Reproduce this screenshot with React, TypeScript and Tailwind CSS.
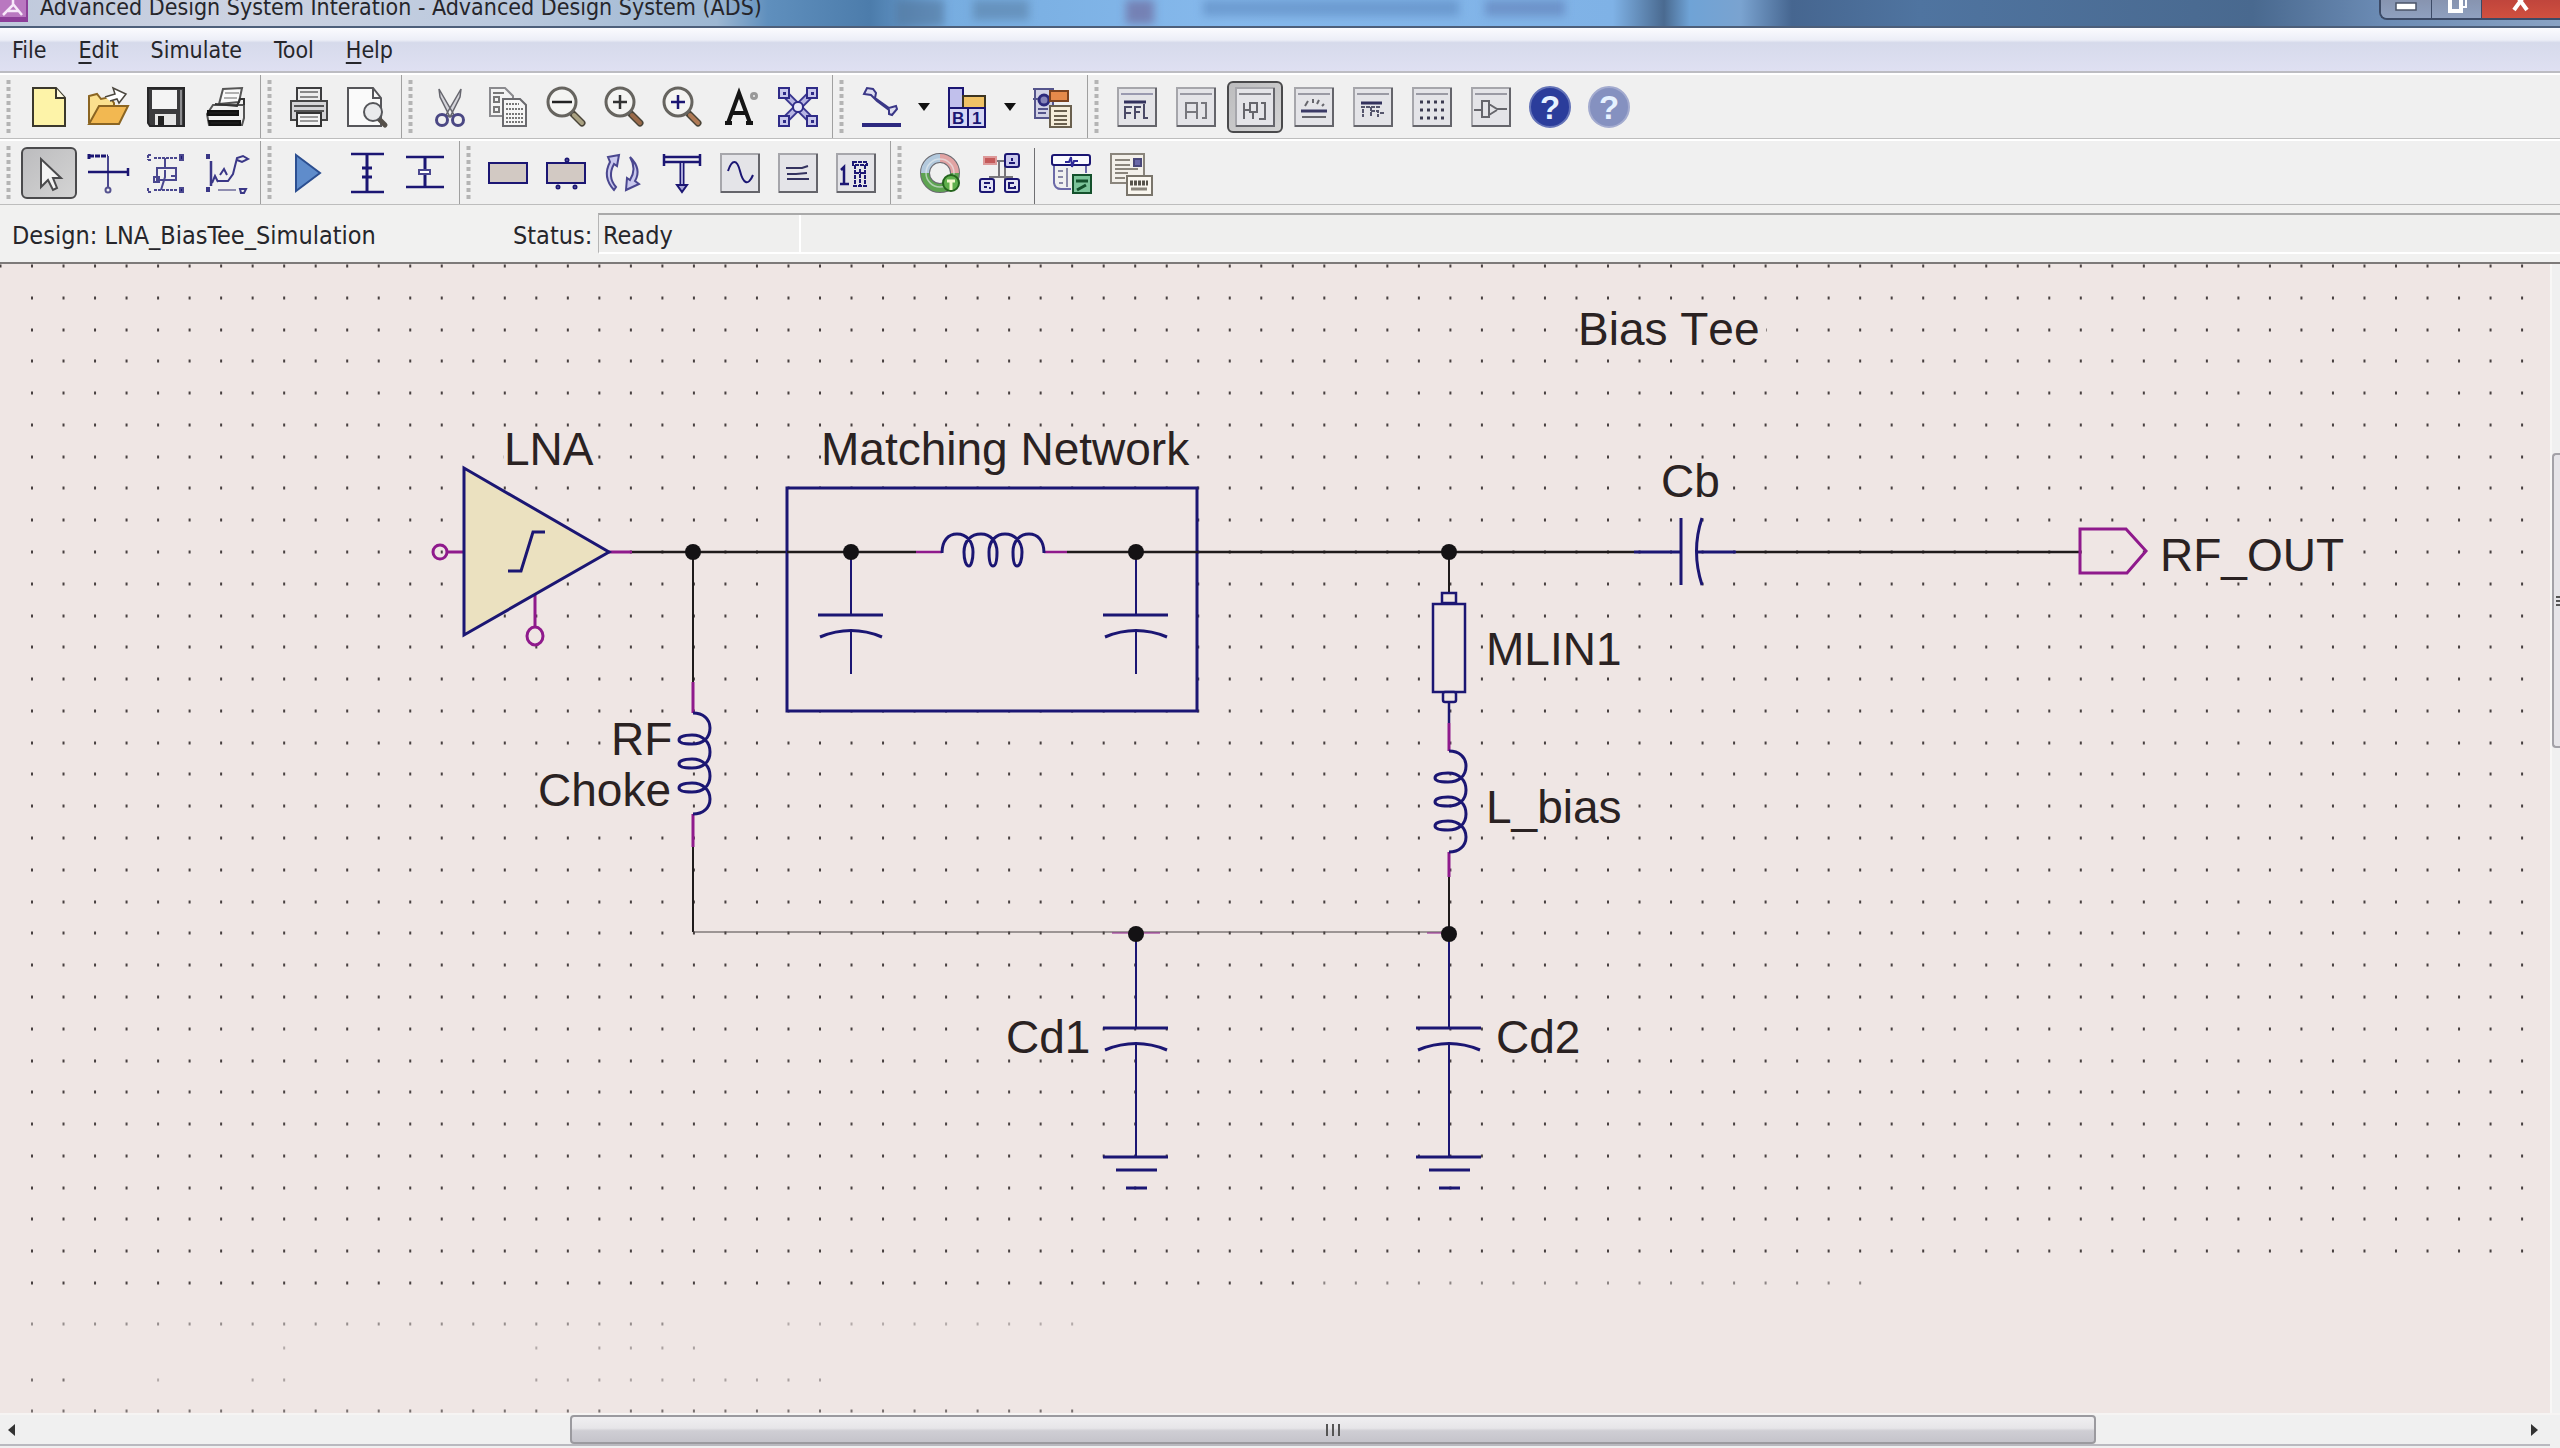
import type { ReactNode } from 'react'
import clsx from 'clsx'

const NAVY = '#1b1673'
const INK = '#1f1b1b'
const PIN = '#8f1a8c'
const SHEET = '#efe6e4'
const UI_FONT = "font-['DejaVu_Sans_Condensed','Noto_Sans',sans-serif]"

export default function App() {
  return (
    <div className={clsx('flex h-screen flex-col overflow-hidden bg-[#efefef] text-[23px] leading-7 text-[#26262b]', UI_FONT)}>
      <TitleBar />
      <MenuBar />
      <MainToolbar />
      <DrawToolbar />
      <StatusRow />
      <div className="flex min-h-0 flex-1 border-t-2 border-[#7d7a79]">
        <main className="min-w-0 flex-1 bg-[#efe6e4]">
          <Schematic />
        </main>
        <VerticalScroll />
      </div>
      <HorizontalScroll />
    </div>
  )
}

/* ---------- window chrome ---------- */

function TitleBar() {
  return (
    <header className="relative flex h-7 shrink-0 items-start overflow-hidden border-b-2 border-[#4d5f7a] bg-[linear-gradient(90deg,#bfc9dc_0%,#cdd3e2_10%,#b9c8dd_20%,#9db7d2_28%,#5f8fbd_30%,#4c7cab_34%,#77ade0_37%,#86b9ec_48%,#7fb2e6_63%,#4a6a90_65%,#6fa3d6_66%,#7aa3d0_68%,#466690_70%,#4f74a0_75%,#49698f_88%,#6b8bb4_93%,#8aa3c4_100%)]">
      {/* shapes of the window behind, seen through the glass */}
      <div className="absolute inset-y-0 left-[35%] w-12 bg-[#54779c]/60 blur-xs" />
      <div className="absolute top-0 left-[38%] h-5 w-14 bg-[#54779c]/50 blur-xs" />
      <div className="absolute top-0 left-[44%] h-6 w-7 bg-[#6d5f93]/60 blur-xs" />
      <div className="absolute top-0 left-[47%] h-4 w-64 bg-[#5580b8]/50 blur-xs" />
      <div className="absolute top-0 left-[58%] h-4 w-20 bg-[#5a74ad]/50 blur-xs" />
      <svg className="relative h-[22px] w-7 shrink-0" viewBox="0 0 28 22">
        <rect width="28" height="22" fill="#8d3f99" />
        <rect y="0" width="26" height="17" fill="#b978c0" />
        <path d="M3 15 L13 5 L13 -3 M13 4 L22 15 M8 11 H18" stroke="#f7e9fa" strokeWidth="2.5" fill="none" />
      </svg>
      <h1 className="relative -mt-[7px] ml-3 flex-1 whitespace-nowrap">Advanced Design System Interation - Advanced Design System (ADS)</h1>
      <div className="relative flex h-5 overflow-hidden rounded-bl-lg border-b-2 border-l-2 border-[#3c4a66]">
        <button aria-label="Minimize" className="flex w-[51px] justify-center border-r border-[#3c4a66] bg-linear-to-b from-[#8794b0] to-[#8fa0bf]">
          <svg width="24" height="14"><rect x="2" y="3" width="20" height="7" fill="#fff" stroke="#4b5468" strokeWidth="1.5" /></svg>
        </button>
        <button aria-label="Restore" className="flex w-[50px] justify-center border-r border-[#3c4a66] bg-linear-to-b from-[#8794b0] to-[#8fa0bf]">
          <svg width="26" height="16"><path d="M12 -3h10v10h-3" fill="none" stroke="#fff" strokeWidth="2" /><rect x="6" y="-2" width="11" height="13" fill="none" stroke="#fff" strokeWidth="4" /></svg>
        </button>
        <button aria-label="Close" className="flex w-[78px] justify-center bg-linear-to-b from-[#c0453c] to-[#d0503f]">
          <svg width="26" height="14"><path d="M6 -8 L19 10 M19 -8 L6 10" stroke="#fff" strokeWidth="4" /></svg>
        </button>
      </div>
    </header>
  )
}

const MENUS = [
  { key: '', rest: 'File' },
  { key: 'E', rest: 'dit' },
  { key: '', rest: 'Simulate' },
  { key: '', rest: 'Tool' },
  { key: 'H', rest: 'elp' },
]

function MenuBar() {
  return (
    <nav className="flex h-[45px] shrink-0 items-center gap-8 border-b-2 border-[#bcbcc2] bg-[linear-gradient(180deg,#fbfbfe_0%,#eceef7_28%,#d6daeb_34%,#dfe0f2_100%)] px-3">
      {MENUS.map(m => (
        <button key={m.key + m.rest} className="leading-7">
          {m.key && <span className="underline decoration-2 underline-offset-4">{m.key}</span>}
          {m.rest}
        </button>
      ))}
    </nav>
  )
}

function StatusRow() {
  return (
    <div className="flex h-[57px] shrink-0 items-stretch bg-[#f1f1f0] pt-2 text-[25px]">
      <div className="flex w-[598px] shrink-0 items-center pb-1 pl-3">
        <span className="w-[501px]">Design: LNA_BiasTee_Simulation</span>
        <span>Status:</span>
      </div>
      <div className="mb-2 flex flex-1 items-center border-t-2 border-b-2 border-l border-t-[#a9a9a9] border-b-white border-l-[#b5b5b5] bg-[#efefee]">
        <output className="flex h-full w-[202px] items-center border-r-2 border-white pt-1 pl-1">Ready</output>
      </div>
    </div>
  )
}

function HorizontalScroll() {
  return (
    <div className="flex h-[35px] shrink-0 items-start border-t-2 border-[#f6f4f3] bg-[#f0f0f0]">
      <div className="flex h-[31px] flex-1 border-b-2 border-[#b9b9bf]">
        <button aria-label="Scroll left" className="flex w-6 items-center justify-center">
          <svg width="8" height="12"><path d="M7 0 L0 6 L7 12 Z" fill="#333" /></svg>
        </button>
        <div className="flex-[547]" />
        <div className="flex flex-[1524] items-center justify-center gap-1 rounded-sm border-2 border-[#9b9a9f] bg-[linear-gradient(180deg,#f0eff1_0%,#e6e5e8_45%,#cfced4_55%,#c5c4cb_100%)]">
          <i className="h-3 w-0.5 bg-[#555]" />
          <i className="h-3 w-0.5 bg-[#555]" />
          <i className="h-3 w-0.5 bg-[#555]" />
        </div>
        <div className="flex-[435]" />
        <button aria-label="Scroll right" className="flex w-5 items-center justify-start">
          <svg width="8" height="12"><path d="M1 0 L8 6 L1 12 Z" fill="#333" /></svg>
        </button>
      </div>
      <div className="w-2.5" />
    </div>
  )
}

function VerticalScroll() {
  return (
    <div className="flex w-2.5 shrink-0 flex-col border-l-2 border-[#f8f7f6] bg-[#f0f0f0]">
      <div className="flex-[190]" />
      <div className="flex flex-[292] flex-col items-end justify-center gap-0.5 rounded-l-sm border-2 border-r-0 border-[#a3a2a8] bg-[#e6e5e9]">
        <i className="h-0.5 w-1 bg-[#555]" />
        <i className="h-0.5 w-1 bg-[#555]" />
        <i className="h-0.5 w-1 bg-[#555]" />
      </div>
      <div className="flex-[667]" />
    </div>
  )
}

/* ---------- toolbars ---------- */

function ToolRow({ children }: { children: ReactNode }) {
  return <div className="flex h-[66px] shrink-0 border-t-2 border-b border-t-white border-b-[#bdbdbd] bg-[#f0f0f0]">{children}</div>
}

function Group({ children, wide, last }: { children: ReactNode; wide?: boolean; last?: boolean }) {
  return (
    <div className={clsx('flex items-center pr-[5px]', wide ? '[&>button]:min-w-[59px]' : '[&>button]:min-w-7', !last && 'border-r border-[#a0a0a0]')}>
      <svg className="mr-2 ml-1.5 h-14 w-[5px] shrink-0">
        <path d="M2.5 1 V56" stroke="#b4b4b4" strokeWidth="4" strokeDasharray="4 3" />
      </svg>
      {children}
    </div>
  )
}

function Tool({ label, pressed, children }: { label: string; pressed?: boolean; children: ReactNode }) {
  return (
    <button aria-label={label} className="flex w-[58px] justify-center">
      <span className={clsx('flex h-[52px] w-14 items-center justify-center rounded-md border-2', pressed ? 'border-[#4a4a4c] bg-linear-to-br from-[#bcbcbe] to-[#d4d4d4]' : 'border-transparent')}>
        <svg className="h-10 w-10 overflow-visible" viewBox="0 0 40 40" fill="none" stroke={NAVY} strokeWidth="2">
          {children}
        </svg>
      </span>
    </button>
  )
}

function Drop({ label }: { label: string }) {
  return (
    <button aria-label={label} className="flex w-7 justify-center">
      <svg width="12" height="8"><path d="M0 0H12L6 8Z" fill="#111" /></svg>
    </button>
  )
}

function Tile({ children }: { children?: ReactNode }) {
  return (
    <>
      <rect x="1" y="1" width="38" height="38" fill="#e4e4e8" stroke="#a6a6ab" />
      <path d="M39 1 V39 H1" stroke="#65656b" />
      {children}
    </>
  )
}

function Lens({ sign, handle, ink }: { sign: string; handle: string; ink: string }) {
  return (
    <>
      <path d="M27 27 L36 36" stroke="#4a4438" strokeWidth="7" strokeLinecap="round" />
      <path d="M28 28 L36 36" stroke={handle} strokeWidth="4" strokeLinecap="round" />
      <circle cx="16" cy="15" r="14" fill="#f4f4f2" stroke="#66645f" strokeWidth="3" />
      <path d={sign} stroke={ink} strokeWidth="2.5" />
    </>
  )
}

function MainToolbar() {
  return (
    <ToolRow>
      <Group wide>
        <Tool label="New">
          <path d="M4 1 H27 L36 11 V39 H4 Z" fill="#fdf3a8" stroke="#3b382c" />
          <path d="M27 1 V11 H36" fill="#fffbe0" stroke="#3b382c" />
        </Tool>
        <Tool label="Open">
          <path d="M1 36 V9 L9 7 L13 12 L22 10 L26 16 V20" fill="#fbe08e" stroke="#8b6522" />
          <path d="M1 37 L11 19 H40 L31 37 Z" fill="#f2b851" stroke="#8b6522" />
          <path d="M17 10 L27 7 L25 1 L38 7 L31 16 L29 12 L22 14" fill="#fff" stroke="#4a463e" strokeWidth="1.5" />
        </Tool>
        <Tool label="Save">
          <path d="M1 1 H37 V39 H3 L1 36 Z" fill="#3b3b3d" stroke="#262628" />
          <rect x="5" y="3" width="25" height="19" fill="#f4f4f4" stroke="none" />
          <rect x="8" y="27" width="21" height="11" fill="#e6e6e6" stroke="none" />
          <rect x="11" y="29" width="6" height="9" fill="#222" stroke="none" />
          <path d="M34 3V38" stroke="#8d8d90" />
        </Tool>
        <Tool label="Print setup">
          <path d="M13 17 L17 2 L36 1 L33 15 Z" fill="#fafafa" stroke="#555" />
          <path d="M19 6H33 M18 11H31" stroke="#999" strokeWidth="1.5" />
          <path d="M1 27 L7 18 H38 V31 L36 38 H3 Z" fill="#f0f0f0" stroke="#555" />
          <path d="M9 17 L31 19 L34 12 H38 V18" stroke="#333" />
          <path d="M2 24 H32 V28 H2 Z M3 34 H34 V38 H4 Z" fill="#1a1a1a" stroke="#111" />
        </Tool>
      </Group>
      <Group>
        <Tool label="Print">
          <rect x="8" y="1" width="24" height="15" fill="#eee" stroke="#3d3d3f" />
          <path d="M11 5H29 M11 10H29" stroke="#888" />
          <path d="M2 14 H38 V33 H2 Z" fill="#d5d5d7" stroke="#444" />
          <path d="M5 19 H35 M5 24 H35" stroke="#555" />
          <rect x="8" y="26" width="24" height="13" fill="#f3f3f3" stroke="#333" />
          <path d="M11 30H29 M11 34H29" stroke="#999" />
        </Tool>
        <Tool label="Print preview">
          <path d="M1 1 H26 L34 11 V39 H1 Z" fill="#fafafa" stroke="#56565a" />
          <path d="M26 1 V11 H34" stroke="#56565a" />
          <path d="M32 32 L38 38" stroke="#55504a" strokeWidth="5" strokeLinecap="round" />
          <circle cx="26" cy="25" r="9" fill="#e9eaec" stroke="#55565a" />
        </Tool>
      </Group>
      <Group>
        <Tool label="Cut">
          <path d="M9 2 L24 28 L20 30 L10 10 Z M31 2 L16 28 L20 30 L30 10 Z" fill="#d4d4da" stroke="#66666e" strokeWidth="1.5" />
          <circle cx="12" cy="33" r="5.5" strokeWidth="3" stroke="#4b4884" />
          <circle cx="28" cy="33" r="5.5" strokeWidth="3" stroke="#4b4884" />
        </Tool>
        <Tool label="Copy">
          <path d="M2 1 H17 L25 9 V29 H2 Z" fill="#f3f3f3" stroke="#8a8a8e" />
          <path d="M5 6H16 M6 10H11V15H6Z M6 20H11V25H6Z" stroke="#777" />
          <path d="M15 12 H32 L38 18 V39 H15 Z" fill="#f6f6f6" stroke="#6a6a6e" />
          <path d="M18 17H31 M18 22H35 M18 27H35 M18 31H35 M18 35H35" stroke="#777" strokeDasharray="2 1" />
        </Tool>
        <Tool label="Zoom out"><Lens sign="M6 15 H26" handle="#a9a182" ink="#222" /></Tool>
        <Tool label="Zoom in"><Lens sign="M9 15 H23 M16 8 V22" handle="#9a6a4a" ink="#333" /></Tool>
        <Tool label="Zoom area"><Lens sign="M9 15 H23 M16 8 V22" handle="#b07a55" ink={NAVY} /></Tool>
        <Tool label="Text">
          <path d="M8 36 L19 6 L30 36 M12 26H26 M5 36H12 M26 36H33" stroke="#151515" strokeWidth="4" />
          <circle cx="34" cy="9" r="2.5" stroke="#999" strokeWidth="3" />
        </Tool>
        <Tool label="Fit view">
          <path d="M8 8 L32 32 M32 8 L8 32" strokeWidth="8" stroke="#3a3790" />
          <path d="M8 8 L32 32 M32 8 L8 32" stroke="#b7b5e3" strokeWidth="4" />
          {[[1, 1], [29, 1], [1, 29], [29, 29]].map(([x, y]) => (
            <g key={`${x}-${y}`}>
              <rect x={x} y={y} width="10" height="10" fill="#c9c8ec" stroke="#2f2b88" />
              <rect x={x + 4} y={y + 4} width="3" height="3" fill="#2f2b88" stroke="none" />
            </g>
          ))}
          <circle cx="20" cy="20" r="5" fill="#e9e9f8" stroke="#2f2b88" />
        </Tool>
      </Group>
      <Group>
        <Tool label="Insert wire">
          <path d="M3 7 L6 1 L12 2 L15 6 L14 11 L28 21 L35 19 L36 22 L31 28 L28 27 L28 23 L16 14 L10 8 Z" fill="#dedef0" stroke="#3a3787" />
          <path d="M1 38 H40" strokeWidth="4" stroke="#2d297f" />
        </Tool>
        <Drop label="Wire options" />
        <Tool label="Component">
          <path d="M2 1 H16 V21 H2 Z" fill="#c1c0ec" />
          <path d="M16 9 H38 V21 H16 Z" fill="#f0c266" stroke="#3c3420" />
          <path d="M2 21 H38 V40 H2 Z M21 21 V40" fill="#d6d6f4" />
          <text x="5" y="37" fontSize="17" fontWeight="bold" fontFamily="Liberation Sans, sans-serif" fill="#1b1673" stroke="none">B</text>
          <text x="25" y="37" fontSize="17" fontWeight="bold" fontFamily="Liberation Sans, sans-serif" fill="#1b1673" stroke="none">1</text>
        </Tool>
        <Drop label="Component options" />
        <Tool label="Netlist">
          <path d="M2 2 H20 V31 H2 Z" fill="#d3d3e6" stroke="#55558c" />
          <circle cx="11" cy="13" r="5" fill="#8583b8" stroke="#2d2a7c" strokeWidth="3" />
          <path d="M0 2H6 M0 12H5 M5 22H15 M5 26H13" stroke="#55558c" />
          <rect x="17" y="4" width="18" height="10" fill="#e58a4b" stroke="#7b4320" />
          <path d="M17 19 H38 V40 H17 Z" fill="#f5edda" stroke="#6a604e" />
          <path d="M21 24H34 M21 29H34 M21 33H34 M21 37H34" stroke="#6a604e" />
        </Tool>
      </Group>
      <Group wide last>
        <Tool label="Schematic view">
          <Tile><path d="M4 7H36" stroke="#9a9ab0" /><path d="M7 15H29" stroke="#32315c" strokeWidth="3" /><path d="M8 32V20H15 M8 26H14 M18 32V20H24 M18 25H23 M27 17V31H31" stroke="#4a4966" /></Tile>
        </Tool>
        <Tool label="Layout view">
          <Tile><path d="M4 7H36" stroke="#9a9aa4" /><path d="M10 32V16H21V32 M10 25H20 M25 16H30V31H26" stroke="#77777d" /></Tile>
        </Tool>
        <Tool label="Symbol view" pressed>
          <Tile><path d="M4 7H36" stroke="#88888f" /><path d="M9 16V32 M9 23H15 M15 16H22V25H15Z M18 25V32 M26 16H30V32H24" stroke="#66666c" /></Tile>
        </Tool>
        <Tool label="Substrate">
          <Tile><path d="M4 7H36" stroke="#9a9aa4" /><path d="M7 24H33" stroke="#3b3a66" strokeWidth="3" /><path d="M8 30H32" stroke="#66666c" /><path d="M11 19 L14 14 M19 16V12 M23 17L25 13 M28 19L30 17" stroke="#66666c" /></Tile>
        </Tool>
        <Tool label="Plot">
          <Tile><path d="M4 7H36" stroke="#9a9aa4" /><path d="M8 16H29" stroke="#32315c" strokeWidth="3" /><path d="M8 20H28 M10 22V30 M18 20V30 M18 24H25V30 M27 26H31" stroke="#55556c" strokeDasharray="4 1" /></Tile>
        </Tool>
        <Tool label="Grid">
          <Tile><path d="M4 7H36" stroke="#9a9aa4" /><path d="M8 15H34 M8 23H34 M8 31H34" stroke="#3b3a50" strokeWidth="3" strokeDasharray="3 4" /></Tile>
        </Tool>
        <Tool label="Port">
          <Tile><path d="M4 7H36" stroke="#9a9aa4" /><path d="M3 23H11 M11 14H18V30H11Z M18 17L26 22H36 M18 28L26 23" stroke="#66666c" /></Tile>
        </Tool>
        <Tool label="Help">
          <circle cx="20" cy="20" r="20" fill="#2b3d9b" stroke="#6473b8" />
          <text x="20" y="32" textAnchor="middle" fontSize="33" fontWeight="bold" fontFamily="Liberation Sans, sans-serif" fill="#e6f2ff" stroke="none">?</text>
        </Tool>
        <Tool label="Context help">
          <circle cx="20" cy="20" r="20" fill="#8591c0" stroke="#a3abcf" />
          <text x="20" y="32" textAnchor="middle" fontSize="33" fontWeight="bold" fontFamily="Liberation Sans, sans-serif" fill="#e6f2ff" stroke="none">?</text>
        </Tool>
      </Group>
    </ToolRow>
  )
}

function DrawToolbar() {
  return (
    <ToolRow>
      <Group wide>
        <Tool label="Select" pressed>
          <path d="M12 6 V34 L19 27 L24 37 L28 35 L24 25 H32 Z" fill="#f3f3f3" stroke="#4a4a4c" />
        </Tool>
        <Tool label="Draw wire">
          <path d="M1 1 V6 M1 3 H20" strokeWidth="3" strokeDasharray="5 1" />
          <path d="M20 3 V34" stroke="#4a478f" />
          <path d="M0 19 H40 M40 15 V23" strokeWidth="2.5" />
          <circle cx="20" cy="37" r="2.5" stroke="#55528f" />
        </Tool>
        <Tool label="Instance">
          <g stroke="#4a478f">
            <path d="M1 2H5 M1 7H5 M1 2V7 M7 5H31" strokeDasharray="3 1" />
            <path d="M33 2H36V7H33Z M33 35H36V39H33Z" fill={NAVY} />
            <path d="M10 15H29V27H10Z M7 24H12V29H7Z M24 23H29V27" />
            <path d="M18 5V14 M18 17V24 L14 37" />
            <path d="M1 35V39H5 M7 37H31" strokeDasharray="3 1" />
          </g>
        </Tool>
        <Tool label="Trace">
          <g stroke="#3a3787">
            <path d="M1 2H3V5H1Z M1 35H3V38H1Z" fill={NAVY} />
            <path d="M5 8V33" strokeWidth="2.5" />
            <path d="M6 30 L9 23 L12 29 M14 22 L18 16 L21 22 M12 28 H22 L27 21 L31 5 L37 3 L42 6 L36 9 L31 7" />
            <path d="M12 37H30" stroke="#8f8db0" />
            <path d="M34 36H40L38 40H35Z" />
          </g>
        </Tool>
      </Group>
      <Group>
        <Tool label="Simulate">
          <path d="M7 2 L31 20 L7 38 Z" fill="#5f8ccb" stroke="#2c4f91" />
        </Tool>
        <Tool label="Marker">
          <path d="M4 1H37 M4 39H37" strokeWidth="2.5" />
          <path d="M20 1V39" strokeWidth="3" />
          <path d="M15 15H25 M15 24H25" strokeWidth="3" />
        </Tool>
        <Tool label="Delta marker">
          <path d="M1 4H39 M1 34H39" strokeWidth="2.5" />
          <path d="M20 4V34" strokeWidth="3" />
          <rect x="14" y="17" width="11" height="4" fill="#fff" stroke="#4a478f" />
        </Tool>
      </Group>
      <Group>
        <Tool label="Rectangle">
          <rect x="1" y="10" width="38" height="20" fill="#d2c9c3" />
        </Tool>
        <Tool label="Subcircuit">
          <rect x="1" y="10" width="38" height="20" fill="#d2c9c3" />
          <circle cx="21" cy="7" r="1.5" /><circle cx="12" cy="34" r="1.5" /><circle cx="29" cy="34" r="1.5" />
        </Tool>
        <Tool label="Rotate">
          <path d="M4 4 L15 2 L13 13 L10 11 Q3 24 12 34 L10 37 Q-2 24 6 9 Z" fill="#c9c8ee" stroke="#4a478f" />
          <path d="M26 4 Q38 16 31 28 L35 31 L22 37 L23 25 L26 27 Q33 16 26 4 Z" fill="#c9c8ee" stroke="#4a478f" />
        </Tool>
        <Tool label="Align">
          <path d="M1 4H39 M1 9H39 M2 1V13 M38 1V13" strokeWidth="2.5" />
          <path d="M20 10V33" strokeWidth="5" /><path d="M20 10V33" stroke="#aaa8d8" />
          <path d="M15 32H25L20 39Z" fill="#aaa8d8" />
        </Tool>
        <Tool label="Source"><Tile><path d="M8 18 C12 6 17 6 20 18 S28 34 33 22" /></Tile></Tool>
        <Tool label="Variables"><Tile><path d="M8 15H24L30 13 M9 21H18L29 20 M9 26H31" stroke="#33325f" /></Tile></Tool>
        <Tool label="Equation">
          <Tile>
            <path d="M5 17L8 14V30 M4 31H13" strokeWidth="2.5" />
            <path d="M17 9H31V12H17Z M19 12V34 M29 12V34 M24 16V32 M19 20H29 M17 33H31" strokeDasharray="4 1" />
          </Tile>
        </Tool>
      </Group>
      <Group wide last>
        <Tool label="Tuning">
          <circle cx="20" cy="20" r="15" strokeWidth="10" stroke="#6b6b72" />
          <path d="M5 20 A15 15 0 0 1 20 5" strokeWidth="8" stroke="#b3c9dd" />
          <path d="M20 5 A15 15 0 0 1 35 20" strokeWidth="8" stroke="#e1a3a3" />
          <path d="M35 20 A15 15 0 0 1 5 20" strokeWidth="8" stroke="#5da351" />
          <circle cx="20" cy="20" r="14" stroke="#e9eef0" strokeWidth="1.5" opacity="0.6" />
          <circle cx="31" cy="30" r="8" fill="#5fb04c" stroke="#24641d" />
          <path d="M27 28H35 M31 28V37" stroke="#f3f9ce" strokeWidth="3" />
        </Tool>
        <Tool label="Hierarchy">
          <path d="M16 8H26 M20 8V25 M10 24H34 M26 10V28" stroke="#77757a" />
          <rect x="5" y="4" width="12" height="7" fill="#c45a5a" stroke="#d99" />
          <rect x="26" y="1" width="14" height="13" rx="2" fill="#c9c8ec" />
          <path d="M30 10H36 M33 5V8" />
          <rect x="1" y="26" width="14" height="13" rx="2" fill="#e2e2f4" /><path d="M5 30H11 M5 34H8 M10 35H12" />
          <rect x="26" y="26" width="14" height="13" rx="2" fill="#e2e2f4" /><path d="M35 30H30V35H36V33" />
        </Tool>
        <i className="mr-1.5 ml-1.5 h-14 w-px self-end bg-[#6f6f72]" />
        <Tool label="Data display">
          <path d="M3 12 V30 Q4 36 10 36 H20 M35 12 V20" stroke="#6b69a8" />
          <path d="M7 18H12 M7 24H12 M8 30H12 M16 15V34" stroke="#8a89a8" />
          <rect x="1" y="2" width="38" height="10" rx="2" fill="#fafaff" />
          <path d="M14 9H18L20 4L21 14L23 8H27" stroke="#2f2b9a" />
          <rect x="22" y="22" width="18" height="18" fill="#7cc49a" stroke="#14512c" />
          <path d="M25 28H37 M26 37L35 32" stroke="#14512c" strokeWidth="3" />
        </Tool>
        <Tool label="Report">
          <rect x="1" y="1" width="33" height="29" fill="#f3f0ea" stroke="#8a857c" />
          <path d="M5 7H20 M5 12H20 M5 16H28 M5 20H18 M5 25H15" stroke="#8a857c" />
          <rect x="24" y="6" width="7" height="7" fill="#6a68a8" stroke="#4a487a" />
          <rect x="17" y="23" width="25" height="19" fill="#faf7f0" stroke="#7a756b" />
          <path d="M20 30H38" stroke="#57534b" strokeWidth="5" strokeDasharray="3 1" /><path d="M21 36H37" stroke="#8a857c" strokeWidth="3" />
        </Tool>
      </Group>
    </ToolRow>
  )
}

/* ---------- schematic sheet ---------- */

const LABELS = [
  { text: 'Bias Tee', x: 1578, y: 345, w: 188 },
  { text: 'LNA', x: 504, y: 465, w: 92 },
  { text: 'Matching Network', x: 821, y: 465, w: 372 },
  { text: 'Cb', x: 1661, y: 497, w: 62 },
  { text: 'RF_OUT', x: 2160, y: 571, w: 188 },
  { text: 'RF', x: 611, y: 755, w: 62 },
  { text: 'Choke', x: 538, y: 806, w: 134 },
  { text: 'MLIN1', x: 1486, y: 665, w: 134 },
  { text: 'L_bias', x: 1486, y: 823, w: 138 },
  { text: 'Cd1', x: 1006, y: 1053, w: 80 },
  { text: 'Cd2', x: 1496, y: 1053, w: 84 },
]

// the last rows of the grid fade out: [y, from, to, opacity]
const FADING_ROWS = [
  [1283, 32, 1300, 0.85],
  [1283, 1310, 1870, 0.5],
  [1324, 32, 670, 0.45],
  [1324, 787, 1080, 0.3],
  [1348, 284, 300, 0.3],
  [1348, 535, 540, 0.3],
  [1348, 598, 700, 0.35],
  [1380, 32, 70, 0.6],
  [1380, 127, 160, 0.3],
  [1380, 252, 290, 0.35],
  [1380, 535, 830, 0.35],
  [1411, 32, 1100, 0.6],
]

const PITCH_X = 31.52
const PITCH_Y = 31.78

function DotRow({ y, from, to, opacity }: { y: number; from: number; to: number; opacity: number }) {
  const start = 32 + Math.ceil((from - 32) / PITCH_X) * PITCH_X
  return <line x1={start - 1} x2={to} y1={y} y2={y} stroke="#2b2424" strokeWidth="3" strokeDasharray={`2 ${PITCH_X - 2}`} opacity={opacity} />
}

function Node({ x, y }: { x: number; y: number }) {
  return <circle cx={x} cy={y} r="8" fill="#141214" />
}

function CoilV({ x, y }: { x: number; y: number }) {
  return (
    <path
      transform={`translate(${x} ${y})`}
      d="M0 0 C10 0 17 6 17 15 C17 25 10 31 -1 31 C-9 31 -14 30 -14 27 C-14 24 -9 22 -1 22 C10 22 17 29 17 39 C17 49 10 55 -1 55 C-9 55 -14 54 -14 51 C-14 48 -9 46 -1 46 C10 46 17 53 17 63 C17 73 10 79 -1 79 C-9 79 -14 78 -14 75 C-14 72 -9 70 -1 70 C10 70 17 77 17 86 C17 95 10 101 0 101"
      stroke={NAVY} strokeWidth="3" fill="none"
    />
  )
}

function Cap({ x, y }: { x: number; y: number }) {
  return (
    <g stroke={NAVY} fill="none" strokeWidth="3">
      <path d={`M${x - 33} ${y} H${x + 32}`} />
      <path d={`M${x - 31} ${y + 22} Q${x} ${y + 9} ${x + 31} ${y + 22}`} />
    </g>
  )
}

function Ground({ x, y }: { x: number; y: number }) {
  return <path d={`M${x - 33} ${y}H${x + 32} M${x - 20} ${y + 13}H${x + 21} M${x - 10} ${y + 31}H${x + 11}`} stroke={NAVY} strokeWidth="3" />
}

function Schematic() {
  const rows = Array.from({ length: 32 }, (_, i) => Math.round(266 + i * PITCH_Y))
  return (
    <svg className="block h-full w-full" role="img" aria-label="Bias tee schematic">
      <g transform="translate(0 -264)">
        {rows.map(y => <DotRow key={y} y={y} from={y === 266 ? 0 : 32} to={2530} opacity={0.85} />)}
        {FADING_ROWS.map(([y, from, to, o]) => <DotRow key={`${y}-${from}`} y={y} from={from} to={to} opacity={o} />)}
        {LABELS.map(l => <rect key={l.text} x={l.x} y={l.y - 37} width={l.w} height="40" fill={SHEET} />)}

        {/* wires */}
        <g stroke={INK} strokeWidth="2" fill="none">
          <path d="M632 552H916 M1067 552H1634 M1736 552H2079" strokeWidth="2.5" />
          <path d="M693 552V682 M693 847V932 M1449 552V593 M1449 877V932" />
          <path d="M693 932H1449" strokeWidth="1" stroke="#4a4444" />
        </g>
        <g stroke={PIN} strokeWidth="3" fill="none">
          <path d="M448 552H464 M609 552H632" />
          <path d="M535 593V627 M693 682V713 M693 814V847 M1449 723V751 M1449 852V877" />
          <path d="M1112 933H1160 M1427 933H1442" strokeWidth="1" />
          <circle cx="440" cy="552" r="7" />
          <ellipse cx="535" cy="636" rx="8" ry="9" />
          <path d="M2080 529H2126L2146 551L2127 573H2080Z" />
        </g>

        {/* amplifier */}
        <path d="M464 468V635L609 552Z" fill="#ebe1c0" stroke={NAVY} strokeWidth="3" />
        <path d="M508 571H521L533 532H545" stroke={NAVY} strokeWidth="3" fill="none" />

        {/* matching network */}
        <rect x="787" y="488" width="410" height="223" fill={SHEET} stroke={NAVY} strokeWidth="3" />
        <path d="M787 552H916 M1067 552H1198" stroke={INK} strokeWidth="2.5" />
        <path d="M916 552H942 M1044 552H1067" stroke={PIN} strokeWidth="2.5" />
        <path
          d="M942 553 C942 541 948 534 957 534 C967 534 973 542 973 552 C973 560 971 566 969 566 C966 566 964 560 964 552 C964 541 971 534 981 534 C991 534 997 542 997 552 C997 560 996 566 993 566 C990 566 989 560 989 552 C989 541 996 534 1005 534 C1015 534 1022 542 1022 552 C1022 560 1020 566 1017 566 C1014 566 1013 560 1013 552 C1013 541 1020 534 1029 534 C1038 534 1044 541 1044 553"
          fill="none" stroke={NAVY} strokeWidth="3"
        />
        <path d="M851 552V615 M851 631V674 M1136 552V615 M1136 631V674" stroke={NAVY} strokeWidth="2" />
        <Cap x={851} y={615} />
        <Cap x={1136} y={615} />

        {/* choke and bias feed */}
        <CoilV x={693} y={713} />
        <CoilV x={1449} y={751} />
        <g fill={SHEET} stroke={NAVY} strokeWidth="2.5">
          <rect x="1442" y="593" width="14" height="10" />
          <rect x="1433" y="604" width="32" height="88" />
          <rect x="1443" y="692" width="13" height="10" rx="2" />
          <path d="M1449 703V723" />
        </g>

        {/* blocking capacitor */}
        <path d="M1634 552H1681 M1697 552H1736 M1702 518Q1691 551 1702 585" stroke={NAVY} strokeWidth="3" fill="none" />
        <path d="M1681 518V585" stroke={NAVY} strokeWidth="3" />

        {/* decoupling */}
        <path d="M1136 934V1028 M1136 1044V1157 M1449 934V1028 M1449 1044V1157" stroke={NAVY} strokeWidth="2" />
        <Cap x={1136} y={1028} />
        <Cap x={1449} y={1028} />
        <Ground x={1136} y={1157} />
        <Ground x={1449} y={1157} />

        <Node x={693} y={552} />
        <Node x={851} y={552} />
        <Node x={1136} y={552} />
        <Node x={1449} y={552} />
        <Node x={1136} y={934} />
        <Node x={1449} y={934} />

        {LABELS.map(l => (
          <text key={l.text} x={l.x} y={l.y} fontSize="46" fontFamily="Liberation Sans, Arial, sans-serif" className="[font-kerning:none]" fill="#2a2222">{l.text}</text>
        ))}
      </g>
    </svg>
  )
}
